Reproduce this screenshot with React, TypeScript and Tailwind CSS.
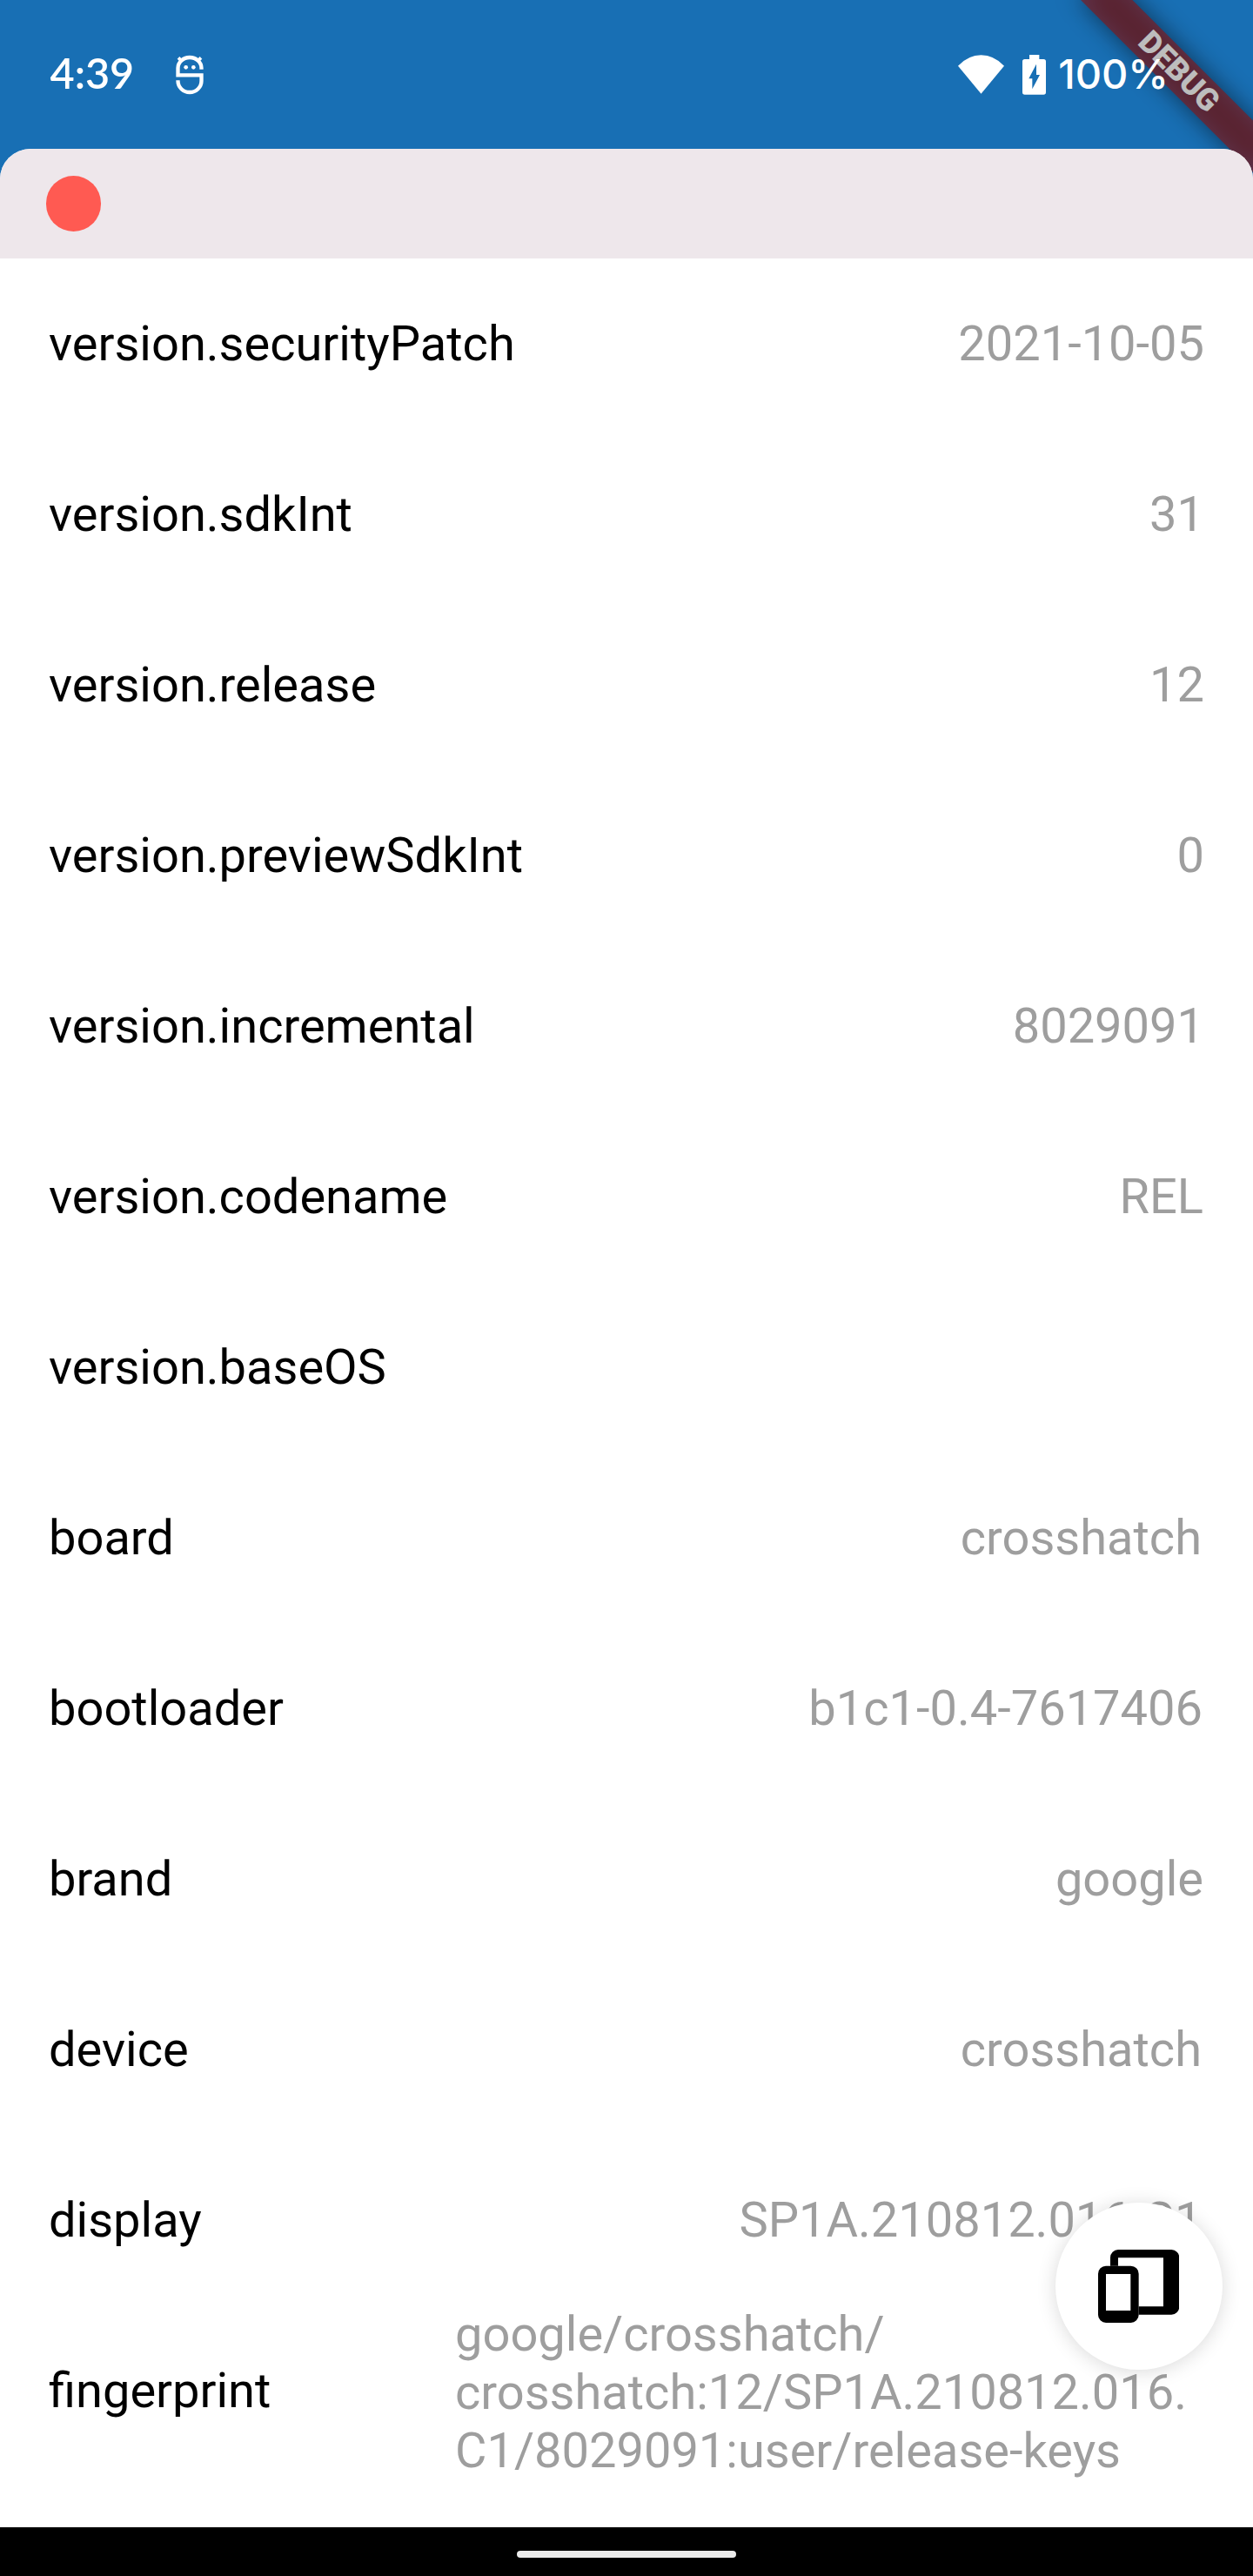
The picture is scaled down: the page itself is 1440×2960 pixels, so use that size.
type Row = { name: string; value: string; valueClass?: string };

const rows: Row[] = [
  { name: 'version.securityPatch', value: '2021-10-05' },
  { name: 'version.sdkInt', value: '31' },
  { name: 'version.release', value: '12' },
  { name: 'version.previewSdkInt', value: '0' },
  { name: 'version.incremental', value: '8029091' },
  { name: 'version.codename', value: 'REL', valueClass: 'pr-[1px]' },
  { name: 'version.baseOS', value: '' },
  { name: 'board', value: 'crosshatch', valueClass: 'pr-[3px]' },
  { name: 'bootloader', value: 'b1c1-0.4-7617406', valueClass: 'pr-[2px]' },
  { name: 'brand', value: 'google', valueClass: 'pr-[1px]' },
  { name: 'device', value: 'crosshatch', valueClass: 'pr-[3px]' },
  { name: 'display', value: 'SP1A.210812.016.C1', valueClass: 'pr-[2.500px]' },
  {
    name: 'fingerprint',
    value: 'google/crosshatch/\ncrosshatch:12/SP1A.210812.016.\nC1/8029091:user/release-keys',
    valueClass: 'w-[861px] pt-[4px] leading-[67px]',
  },
];

function BugIcon() {
  return (
    <svg className="ml-[49px] h-[46px] w-[32px]" viewBox="604 187 96 138" fill="none" stroke="#fff" strokeWidth="13">
      <path d="M692.500 237v-4a40.500 37 0 0 0-81 0v24h81v20a40.500 39 0 0 1-81 0v-2" />
      <path d="M613 197l10 10M691 197l-10 10" strokeWidth="11" />
      <circle cx="639" cy="230" r="7" fill="#fff" stroke="none" />
      <circle cx="665" cy="230" r="7" fill="#fff" stroke="none" />
    </svg>
  );
}

function WifiIcon() {
  return (
    <svg className="h-[45px] w-[53px]" viewBox="126 188 159 135" fill="#fff">
      <path d="M126 226Q162 189 205.500 189T285 226L205.500 322z" />
    </svg>
  );
}

function BatteryIcon() {
  return (
    <svg className="ml-[21px] h-[46px] w-[27px]" viewBox="348 186 81 138" fill="#fff">
      <path
        fillRule="evenodd"
        d="M372 186h34v15h15q8 0 8 8v106q0 8-8 8h-65q-8 0-8-8V209q0-8 8-8h16zM396 218L370 268h12v36l26-49h-12z"
      />
    </svg>
  );
}

function DevicesIcon() {
  return (
    <svg className="h-[84px] w-[93.300px]" viewBox="246 285 280 252" fill="#000">
      <path d="M315 285H499a27 27 0 0 1 27 27V482a27 27 0 0 1-27 27H386V481H471V313H315V341H288V312a27 27 0 0 1 27-27z" />
      <path
        fillRule="evenodd"
        d="M273 341H359a27 27 0 0 1 27 27V510a27 27 0 0 1-27 27H273a27 27 0 0 1-27-27V368a27 27 0 0 1 27-27zM273 369V495H358V369z"
      />
    </svg>
  );
}

function DebugBanner() {
  return (
    <div className="absolute top-0 right-0 h-0 w-0 rotate-45">
      <div className="absolute top-[98px] left-[-140px] h-[42px] w-[280px] bg-black/50 blur-[14px]" />
      <div className="absolute top-[98px] left-[-140px] flex h-[42px] w-[280px] items-center justify-center bg-[#b71c1c]/[0.627] pr-[4px] pb-[1px] text-[35.700px] leading-none font-black text-white">
        DEBUG
      </div>
    </div>
  );
}

function StatusBar() {
  return (
    <div className="relative flex h-[171px] items-center pl-[57.500px] text-white">
      <span className="w-[95px] pb-[4px] font-['Lato'] text-[48.500px] leading-none font-semibold">4:39</span>
      <BugIcon />
      <div className="ml-auto flex items-center pr-[97px]">
        <WifiIcon />
        <BatteryIcon />
        <span className="ml-[14px] pb-[2px] font-['Inter'] text-[47px] leading-none font-medium">100%</span>
      </div>
    </div>
  );
}

export default function App() {
  return (
    <div className="relative flex h-[2960px] w-[1440px] flex-col overflow-hidden bg-[#2196f3] font-['Roboto',sans-serif]">
      <DebugBanner />
      <div className="absolute inset-0 bg-black/[0.26]" />
      <StatusBar />
      <main className="relative flex min-h-0 flex-1 flex-col overflow-hidden rounded-t-[35px] bg-white">
        <div className="flex h-[126px] shrink-0 items-center bg-[#eee7eb] pl-[52.500px]">
          <div className="size-[63.500px] rounded-full bg-[#ff5a52]" />
        </div>
        <ul className="text-[56px] leading-[66px]">
          {rows.map((row) => (
            <li key={row.name} className="flex h-[196px] items-center justify-between px-[56px]">
              <span className="text-black">{row.name}</span>
              <span className={`whitespace-pre text-[#9e9e9e] ${row.valueClass ?? ''}`}>{row.value}</span>
            </li>
          ))}
        </ul>
        <button className="absolute right-[35px] bottom-[181px] flex size-[192.500px] items-center justify-center rounded-full bg-white shadow-[0_2px_22px_rgba(0,0,0,0.15)]">
          <DevicesIcon />
        </button>
      </main>
      <div className="relative flex h-[56px] justify-center bg-black pt-[27px]">
        <div className="h-[8px] w-[252px] rounded-full bg-[#ebebeb]" />
      </div>
    </div>
  );
}
